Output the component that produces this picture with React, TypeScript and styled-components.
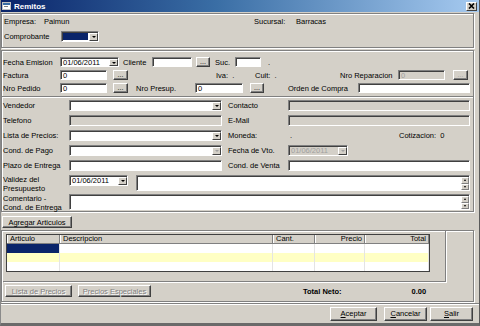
import React from 'react'
import styled, { createGlobalStyle } from 'styled-components'

const GlobalStyle = createGlobalStyle`
  html, body {
    margin: 0;
    padding: 0;
    background: #d4d0c8;
  }
  body {
    font-family: "Liberation Sans", Arial, sans-serif;
    font-size: 7.5px;
    color: #000;
  }
  * {
    box-sizing: border-box;
  }
`

// ventana
const Window = styled.div`
  width: 480px;
  height: 326px;
  background: #d4d0c8;
  border-left: 1px solid #8a8a8a;
  border-right: 1px solid #5a5a5a;
  border-bottom: 3px solid #6a6a6a;
  display: flex;
  flex-direction: column;
  overflow: hidden;
`

const TitleBar = styled.div`
  height: 12px;
  flex: none;
  display: flex;
  align-items: center;
  padding: 0 2px 0 1px;
  background: linear-gradient(to right, #0a246a 0%, #3a6ea5 45%, #a6caf0 100%);
`

const TitleText = styled.span`
  margin-left: 3px;
  color: #fff;
  font-weight: bold;
  font-size: 8px;
`

const CloseBtn = styled.div`
  margin-left: auto;
  width: 11px;
  height: 9px;
  background: #d4d0c8;
  border: 1px solid;
  border-color: #fff #404040 #404040 #fff;
  display: flex;
  align-items: center;
  justify-content: center;
`

// marco agrupador
const Group = styled.div<{ $mt: number; $h?: number; $pt?: number }>`
  margin: ${p => p.$mt}px 5px 0 0;
  height: ${p => (p.$h ? p.$h + 'px' : 'auto')};
  flex: none;
  border: 1px solid #808080;
  box-shadow: inset 1px 1px #fff, 1px 1px #fff;
  padding: ${p => p.$pt ?? 0}px 2px 1px 1px;
  display: flex;
  flex-direction: column;
`

const Row = styled.div<{ $mt?: number; $h: number; $top?: boolean }>`
  display: flex;
  align-items: ${p => (p.$top ? 'flex-start' : 'center')};
  height: ${p => p.$h}px;
  margin-top: ${p => p.$mt ?? 0}px;
  white-space: nowrap;
`

const Label = styled.span<{ $w?: number; $ml?: number; $gray?: boolean }>`
  flex: none;
  width: ${p => (p.$w ? p.$w + 'px' : 'auto')};
  margin-left: ${p => p.$ml ?? 0}px;
  line-height: 9px;
  white-space: pre;
  color: ${p => (p.$gray ? '#808080' : '#000')};
`

const Bold = styled(Label)`
  font-weight: bold;
`

const Field = styled.div<{ $w?: number; $h?: number; $ml?: number; $off?: boolean }>`
  flex: ${p => (p.$w ? 'none' : '1')};
  width: ${p => (p.$w ? p.$w + 'px' : 'auto')};
  height: ${p => p.$h ?? 11}px;
  margin-left: ${p => p.$ml ?? 0}px;
  background: ${p => (p.$off ? '#d4d0c8' : '#fff')};
  border: 1px solid;
  border-color: #808080 #fff #fff #808080;
  box-shadow: inset 1px 1px #404040;
  padding: 1px 0 0 2px;
  display: flex;
  align-items: stretch;
  color: ${p => (p.$off ? '#a0a0a0' : '#000')};
  line-height: 8px;
`

const FieldText = styled.span`
  flex: 1;
  display: flex;
  align-items: center;
`

const SelFill = styled.span`
  flex: 1;
  margin: 0 1px 1px -1px;
  background: #0a246a;
`

const DropBtn = styled.span<{ $off?: boolean }>`
  flex: none;
  width: 9px;
  background: #d4d0c8;
  border: 1px solid;
  border-color: #fff #404040 #404040 #fff;
  display: flex;
  align-items: center;
  justify-content: center;
  &::after {
    content: '';
    border-left: 2px solid transparent;
    border-right: 2px solid transparent;
    border-top: 2px solid ${p => (p.$off ? '#a0a0a0' : '#000')};
  }
`

const ScrollBar = styled.span`
  flex: none;
  width: 8px;
  margin-left: auto;
  display: flex;
  flex-direction: column;
  background: #ece9e4;
`

const ScrollArrow = styled.span<{ $up?: boolean }>`
  height: 7px;
  background: #d4d0c8;
  border: 1px solid;
  border-color: #fff #808080 #808080 #fff;
  display: flex;
  align-items: center;
  justify-content: center;
  margin-top: ${p => (p.$up ? 0 : 'auto')};
  &::after {
    content: '';
    border-left: 1.5px solid transparent;
    border-right: 1.5px solid transparent;
    ${p => (p.$up ? 'border-bottom' : 'border-top')}: 2px solid #000;
  }
`

const Dots = styled.button<{ $ml: number; $w: number; $off?: boolean }>`
  flex: none;
  width: ${p => p.$w}px;
  height: 10px;
  margin-left: ${p => p.$ml}px;
  padding: 0;
  font: inherit;
  font-size: 7px;
  line-height: 6px;
  background: #d4d0c8;
  border: 1px solid;
  border-color: #fff #404040 #404040 #fff;
  box-shadow: inset -1px -1px #808080;
  color: ${p => (p.$off ? '#a0a0a0' : '#000')};
`

const Sep = styled.div`
  height: 2px;
  margin: 3px -2px 0 -1px;
  border-top: 1px solid #808080;
  border-bottom: 1px solid #fff;
`

const Btn = styled.button<{ $w: number; $h: number; $ml?: number; $off?: boolean }>`
  flex: none;
  width: ${p => p.$w}px;
  height: ${p => p.$h}px;
  margin-left: ${p => p.$ml ?? 0}px;
  padding: 0;
  font: inherit;
  background: #d4d0c8;
  border: 1px solid;
  border-color: #fff #404040 #404040 #fff;
  box-shadow: inset -1px -1px #808080;
  color: ${p => (p.$off ? '#808080' : '#000')};
  text-shadow: ${p => (p.$off ? '1px 1px #fff' : 'none')};
`

// grilla de articulos
const GridHolder = styled.div`
  height: 51px;
  width: 443px;
  flex: none;
  padding: 3px 0 0 3px;
  border-right: 1px solid #808080;
  border-bottom: 1px solid #808080;
  box-shadow: 1px 1px #fff;
`

const Grid = styled.div`
  width: 424px;
  height: 38px;
  border: 1px solid #404040;
  box-shadow: inset 1px 1px #808080;
  background: #fff;
  display: flex;
  flex-direction: column;
`

const GridRow = styled.div<{ $bg: string; $head?: boolean }>`
  display: grid;
  grid-template-columns: 53px 213px 42px 50px 64px;
  height: 9px;
  background: ${p => p.$bg};
  border-bottom: ${p => (p.$head ? '1px solid #808080' : 'none')};
`

const Cell = styled.div<{ $right?: boolean; $sel?: boolean; $head?: boolean }>`
  border-right: 1px solid ${p => (p.$head ? '#808080' : '#e4e4e4')};
  background: ${p => (p.$sel ? '#0a246a' : 'transparent')};
  text-align: ${p => (p.$right ? 'right' : 'left')};
  padding: 0 2px;
  line-height: 8px;
  ${p => (p.$head ? 'border-left: 1px solid #fff;' : '')}
`

const ActionsRow = styled.div`
  display: flex;
  align-items: center;
  height: 16px;
  margin-top: 1px;
  padding-left: 2px;
`

const Footer = styled.div`
  flex: 1;
  display: flex;
  align-items: center;
  justify-content: flex-end;
  padding-right: 6px;
  border-top: 1px solid #808080;
  box-shadow: inset 0 1px #fff;
  margin-top: 1px;
`

const columns = ['Articulo', 'Descripcion', 'Cant.', 'Precio', 'Total']
const rowColors = ['#ffffff', '#ffffc4', '#ffffff']

const Combo = ({ w, ml, value, off, h }: { w?: number; ml?: number; value?: string; off?: boolean; h?: number }) => (
  <Field $w={w} $ml={ml} $h={h} $off={off && !!value}>
    <FieldText>{value}</FieldText>
    <DropBtn $off={off} />
  </Field>
)

const Memo = ({ w, ml }: { w?: number; ml?: number }) => (
  <Field $w={w} $ml={ml} $h={16}>
    <ScrollBar>
      <ScrollArrow $up />
      <ScrollArrow />
    </ScrollBar>
  </Field>
)

const App = () => {
  return (
    <>
      <GlobalStyle />
      <Window>
        <TitleBar>
          <svg width="9" height="8" viewBox="0 0 9 8">
            <rect x="0.5" y="0.5" width="8" height="7" fill="#fff" stroke="#c0c0c0" />
            <rect x="1" y="1" width="7" height="2" fill="#3a6ea5" />
            <rect x="2" y="4" width="4" height="1" fill="#808080" />
          </svg>
          <TitleText>Remitos</TitleText>
          <CloseBtn>
            <svg width="7" height="6" viewBox="0 0 7 6">
              <path d="M1 0.5 L6 5.5 M6 0.5 L1 5.5" stroke="#000" strokeWidth="1.6" />
            </svg>
          </CloseBtn>
        </TitleBar>

        <Group $mt={1} $h={35} $pt={1}>
          <Row $h={10} $mt={1}>
            <Label $w={40} $ml={1}>Empresa:</Label>
            <Label $w={210}>Paimun</Label>
            <Label $w={42}>Sucursal:</Label>
            <Label>Barracas</Label>
          </Row>
          <Row $h={11} $mt={5}>
            <Label $w={57} $ml={1}>Comprobante</Label>
            <Field $w={38}>
              <SelFill />
              <DropBtn />
            </Field>
          </Row>
        </Group>

        <Group $mt={2} $pt={6}>
          <Row $h={10}>
            <Label $w={57}>Fecha Emision</Label>
            <Combo w={59} h={10} value="01/06/2011" />
            <Label $w={29} $ml={4}>Cliente</Label>
            <Field $w={40} $h={10} />
            <Dots $ml={4} $w={14}>...</Dots>
            <Label $w={20} $ml={5}>Suc.</Label>
            <Field $w={26} $h={10} />
            <Label $ml={7}>.</Label>
          </Row>
          <Row $h={10} $mt={3}>
            <Label $w={57}>Factura</Label>
            <Field $w={47} $h={10}><FieldText>0</FieldText></Field>
            <Dots $ml={6} $w={15}>...</Dots>
            <Label $w={39} $ml={88}>{'Iva:  .'}</Label>
            <Label $w={85}>{'Cuit:  .'}</Label>
            <Label $w={58}>Nro Reparacion</Label>
            <Field $w={47} $h={10} $off><FieldText>0</FieldText></Field>
            <Dots $ml={8} $w={15} $off>...</Dots>
          </Row>
          <Row $h={10} $mt={3}>
            <Label $w={57}>Nro Pedido</Label>
            <Field $w={47} $h={10}><FieldText>0</FieldText></Field>
            <Dots $ml={6} $w={15}>...</Dots>
            <Label $w={59} $ml={8}>Nro Presup.</Label>
            <Field $w={48} $h={10}><FieldText>0</FieldText></Field>
            <Dots $ml={7} $w={14}>...</Dots>
            <Label $w={70} $ml={24}>Orden de Compra</Label>
            <Field $w={112} $h={10} />
          </Row>
          <Sep />
          <Row $h={11} $mt={2}>
            <Label $w={66}>Vendedor</Label>
            <Combo w={153} />
            <Label $w={60} $ml={6}>Contacto</Label>
            <Field $w={182} $off />
          </Row>
          <Row $h={11} $mt={4}>
            <Label $w={66}>Telefono</Label>
            <Field $w={153} $off />
            <Label $w={60} $ml={6}>E-Mail</Label>
            <Field $w={182} $off />
          </Row>
          <Row $h={11} $mt={4}>
            <Label $w={66}>Lista de Precios:</Label>
            <Combo w={153} />
            <Label $w={60} $ml={6}>Moneda:</Label>
            <Label $w={109} $ml={2}>.</Label>
            <Label>{'Cotizacion:  0'}</Label>
          </Row>
          <Row $h={11} $mt={4}>
            <Label $w={66}>Cond. de Pago</Label>
            <Combo w={153} off />
            <Label $w={60} $ml={6}>Fecha de Vto.</Label>
            <Combo w={60} value="01/06/2011" off />
          </Row>
          <Row $h={11} $mt={4}>
            <Label $w={66}>Plazo de Entrega</Label>
            <Field $w={153} />
            <Label $w={60} $ml={6}>Cond. de Venta</Label>
            <Field $w={182} />
          </Row>
          <Row $h={16} $mt={4} $top>
            <Label $w={66}>
              Validez del{'\n'}Presupuesto
            </Label>
            <Combo w={59} value="01/06/2011" />
            <Memo w={334} ml={8} />
          </Row>
          <Row $h={16} $mt={3} $top>
            <Label $w={66}>
              Comentario -{'\n'}Cond. de Entrega
            </Label>
            <Memo w={401} />
          </Row>
        </Group>

        <Row $h={12} $mt={4}>
          <Btn $w={70} $h={12} $ml={1}>Agregar Articulos</Btn>
        </Row>

        <Group $mt={2} $h={72}>
          <GridHolder>
            <Grid>
              <GridRow $bg="#d4d0c8" $head>
                {columns.map((c, i) => (
                  <Cell key={c} $head $right={i > 2}>{c}</Cell>
                ))}
              </GridRow>
              {rowColors.map((bg, r) => (
                <GridRow key={r} $bg={bg}>
                  {columns.map((c, i) => (
                    <Cell key={c} $sel={r === 0 && i === 0} />
                  ))}
                </GridRow>
              ))}
            </Grid>
          </GridHolder>
          <ActionsRow>
            <Btn $w={67} $h={12} $off>Lista de Precios</Btn>
            <Btn $w={73} $h={12} $ml={6} $off>Precios Especiales</Btn>
            <Bold $ml={152}>Total Neto:</Bold>
            <Bold $ml={70}>0.00</Bold>
          </ActionsRow>
        </Group>

        <Footer>
          <Btn $w={47} $h={14}><u>A</u>ceptar</Btn>
          <Btn $w={43} $h={14} $ml={7}><u>C</u>ancelar</Btn>
          <Btn $w={43} $h={14} $ml={3}><u>S</u>alir</Btn>
        </Footer>
      </Window>
    </>
  )
}

export default App
